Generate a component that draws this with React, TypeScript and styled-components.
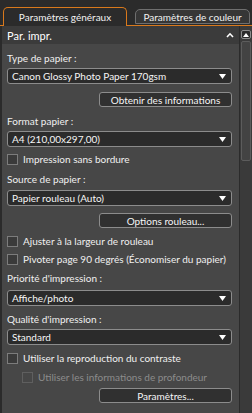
import React from "react";
import styled, { createGlobalStyle } from "styled-components";

const Global = createGlobalStyle`
  html, body { margin: 0; padding: 0; background: #2b2b2b; }
  * { box-sizing: border-box; }
`;

const Root = styled.div`
  width: 252px;
  height: 413px;
  background: #2b2b2b;
  font-family: Lato, "Noto Sans", sans-serif;
  font-size: 10px;
  color: #f0f0f0;
  display: flex;
  flex-direction: column;
  overflow: hidden;
`;

const TabBar = styled.div`
  display: flex;
  align-items: flex-end;
  height: 26px;
  padding: 0 2px 0 3px;
  gap: 8px;
  border-bottom: 1px solid #d9791c;
`;

const Tab = styled.div<{ $active?: boolean }>`
  flex: 0 0 ${(p) => (p.$active ? "124px" : "115px")};
  height: ${(p) => (p.$active ? "19px" : "15px")};
  margin-bottom: ${(p) => (p.$active ? "-1px" : "1px")};
  display: flex;
  align-items: center;
  justify-content: center;
  padding-top: ${(p) => (p.$active ? "0" : "1px")};
  border: 1px solid ${(p) => (p.$active ? "#d9791c" : "#6f6f6f")};
  border-bottom: ${(p) => (p.$active ? "none" : "1px solid #6f6f6f")};
  border-radius: 5px 5px 0 0;
  background: ${(p) => (p.$active ? "#2b2b2b" : "#363636")};
  color: #f2f2f2;
  font-size: 10px;
  white-space: nowrap;
`;

const Body = styled.div`
  flex: 1;
  display: flex;
  min-height: 0;
`;

const Main = styled.div`
  flex: 1;
  min-width: 0;
  overflow: hidden;
  display: flex;
  flex-direction: column;
  margin: 0 1px 0 2px;
  background: #474747;
`;

const Header = styled.div`
  height: 18px;
  flex: 0 0 18px;
  display: flex;
  align-items: center;
  justify-content: space-between;
  padding: 0 5px 0 5px;
  background: #3b3b3b;
  font-size: 11px;
  color: #ffffff;
`;

const Caret = styled.svg`
  width: 8px;
  height: 6px;
`;

const Content = styled.div`
  display: flex;
  flex-direction: column;
  padding: 0 7px 0 5px;
`;

const Label = styled.div<{ $top: number }>`
  height: 14px;
  line-height: 14px;
  margin-top: ${(p) => p.$top}px;
  color: #f0f0f0;
  white-space: nowrap;
`;

const Select = styled.div<{ $top: number }>`
  height: 16px;
  margin-top: ${(p) => p.$top}px;
  display: flex;
  align-items: center;
  justify-content: space-between;
  padding: 0 5px 0 4px;
  background: #2b2b2b;
  border: 1px solid #8c8c8c;
  border-radius: 3px;
  color: #f6f6f6;
  white-space: nowrap;
`;

const Arrow = styled.svg`
  width: 7px;
  height: 5px;
`;

const Button = styled.div<{ $top: number }>`
  align-self: flex-end;
  width: 133px;
  height: 15px;
  margin-top: ${(p) => p.$top}px;
  display: flex;
  align-items: center;
  justify-content: center;
  background: #303030;
  border: 1px solid #8c8c8c;
  border-radius: 3px;
  color: #f6f6f6;
  white-space: nowrap;
`;

const CheckRow = styled.div<{ $top: number; $indent?: number; $disabled?: boolean }>`
  display: flex;
  align-items: center;
  gap: 5px;
  height: 14px;
  margin-top: ${(p) => p.$top}px;
  padding-left: ${(p) => p.$indent ?? 0}px;
  color: ${(p) => (p.$disabled ? "#8c8c8c" : "#f0f0f0")};
  white-space: nowrap;
`;

const Box = styled.span<{ $disabled?: boolean }>`
  width: 11px;
  height: 11px;
  flex: 0 0 11px;
  background: ${(p) => (p.$disabled ? "#474747" : "#3a3a3a")};
  border: 1px solid ${(p) => (p.$disabled ? "#5f5f5f" : "#7c7c7c")};
`;

const Scroll = styled.div`
  width: 12px;
  flex: 0 0 12px;
  display: flex;
  flex-direction: column;
  align-items: flex-start;
  padding: 4px 0 0 1px;
  background: #3a3a3a;
  gap: 2px;
`;

const ScrollBtn = styled.div`
  width: 10px;
  height: 9px;
  border: 1px solid #8c8c8c;
  border-radius: 2px;
  background: #2b2b2b;
  display: flex;
  align-items: center;
  justify-content: center;
`;

const Thumb = styled.div`
  width: 10px;
  height: 120px;
  border: 1px solid #5c5c5c;
  border-radius: 2px;
  background: #434343;
`;

const Down = () => (
  <Arrow viewBox="0 0 7 5">
    <path d="M0 0 H7 L3.5 5 Z" fill="#fff" />
  </Arrow>
);

const Check = ({ text, top, indent, disabled }: { text: string; top: number; indent?: number; disabled?: boolean }) => (
  <CheckRow $top={top} $indent={indent} $disabled={disabled}>
    <Box $disabled={disabled} />
    <span>{text}</span>
  </CheckRow>
);

export default function App() {
  return (
    <Root>
      <Global />
      <TabBar>
        <Tab $active>Paramètres généraux</Tab>
        <Tab>Paramètres de couleur</Tab>
      </TabBar>
      <Body>
        <Main>
          <Header>
            <span>Par. impr.</span>
            <Caret viewBox="0 0 8 6">
              <path d="M1 5 L4 1.8 L7 5" stroke="#fff" strokeWidth="1.6" fill="none" />
            </Caret>
          </Header>
          <Content>
            <Label $top={7}>Type de papier :</Label>
            <Select $top={3}>
              <span>Canon Glossy Photo Paper 170gsm</span>
              <Down />
            </Select>
            <Button $top={8}>Obtenir des informations</Button>
            <Label $top={7}>Format papier :</Label>
            <Select $top={3}>
              <span>A4 (210,00x297,00)</span>
              <Down />
            </Select>
            <Check text="Impression sans bordure" top={5} />
            <Label $top={6}>Source de papier :</Label>
            <Select $top={4}>
              <span>Papier rouleau (Auto)</span>
              <Down />
            </Select>
            <Button $top={7}>Options rouleau...</Button>
            <Check text="Ajuster à la largeur de rouleau" top={6} />
            <Check text="Pivoter page 90 degrés (Économiser du papier)" top={4} />
            <Label $top={5}>Priorité d'impression :</Label>
            <Select $top={5}>
              <span>Affiche/photo</span>
              <Down />
            </Select>
            <Label $top={6}>Qualité d'impression :</Label>
            <Select $top={3}>
              <span>Standard</span>
              <Down />
            </Select>
            <Check text="Utiliser la reproduction du contraste" top={6} />
            <Check text="Utiliser les informations de profondeur" top={5} indent={15} disabled />
            <Button $top={4}>Paramètres...</Button>
          </Content>
        </Main>
        <Scroll>
          <ScrollBtn>
            <svg width="6" height="4" viewBox="0 0 6 4">
              <path d="M0 4 L3 0 L6 4 Z" fill="#fff" />
            </svg>
          </ScrollBtn>
          <Thumb />
        </Scroll>
      </Body>
    </Root>
  );
}
